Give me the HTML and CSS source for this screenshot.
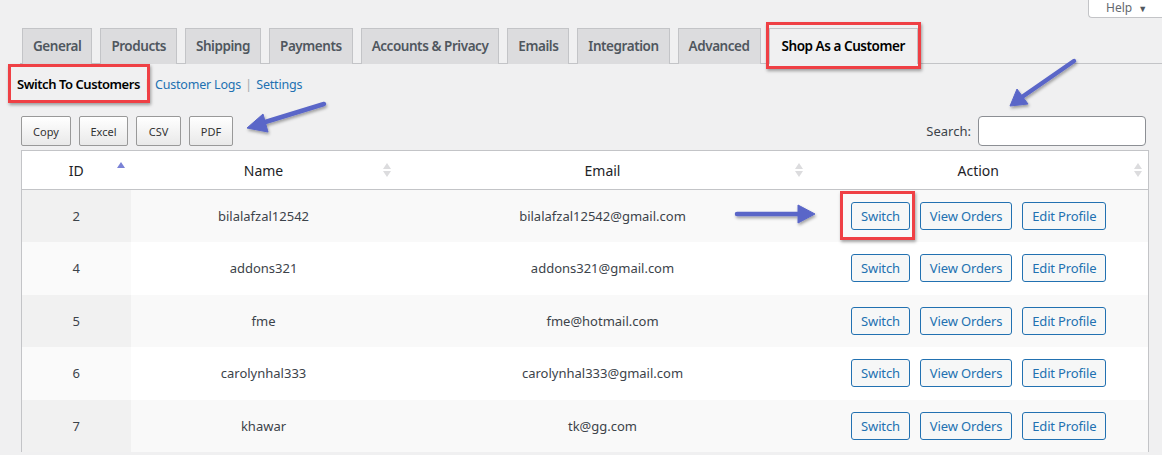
FILE: index.html
```html
<!DOCTYPE html>
<html>
<head>
<meta charset="utf-8">
<link rel="stylesheet" href="styles.css">
</head>
<body>
<div class="page">
  <div class="topbar">
    <div class="help">Help <span class="caret">▼</span></div>
  </div>
  <nav class="tabs">
    <a class="tab">General</a>
    <a class="tab">Products</a>
    <a class="tab">Shipping</a>
    <a class="tab">Payments</a>
    <a class="tab">Accounts &amp; Privacy</a>
    <a class="tab">Emails</a>
    <a class="tab">Integration</a>
    <a class="tab">Advanced</a>
    <a class="tab active mark mark-tab">Shop As a Customer</a>
  </nav>
  <ul class="subnav">
    <li class="current mark mark-sub">Switch To Customers</li>
    <li class="sep">|</li>
    <li><a>Customer Logs</a></li>
    <li class="sep">|</li>
    <li><a>Settings</a></li>
  </ul>
  <div class="toolbar">
    <div class="exports">
      <button class="dt-btn">Copy</button>
      <button class="dt-btn">Excel</button>
      <button class="dt-btn">CSV</button>
      <button class="dt-btn">PDF</button>
    </div>
    <label class="search">Search: <input type="text"></label>
  </div>
  <table class="grid">
    <colgroup>
      <col class="c-id"><col class="c-name"><col class="c-email"><col class="c-action">
    </colgroup>
    <thead>
      <tr>
        <th>ID<svg class="sort asc" width="8" height="12" viewBox="0 0 8 12"><path d="M0 7 L4 1 L8 7 Z"/></svg></th>
        <th>Name<svg class="sort" width="8" height="14" viewBox="0 0 8 14"><path d="M0 6 L4 0 L8 6 Z M0 8 L4 14 L8 8 Z"/></svg></th>
        <th>Email<svg class="sort" width="8" height="14" viewBox="0 0 8 14"><path d="M0 6 L4 0 L8 6 Z M0 8 L4 14 L8 8 Z"/></svg></th>
        <th>Action<svg class="sort" width="8" height="14" viewBox="0 0 8 14"><path d="M0 6 L4 0 L8 6 Z M0 8 L4 14 L8 8 Z"/></svg></th>
      </tr>
    </thead>
    <tbody>
      <tr>
        <td>2</td><td>bilalafzal12542</td><td>bilalafzal12542@gmail.com</td>
        <td><div class="acts"><button class="wp-btn mark mark-btn">Switch</button><button class="wp-btn">View Orders</button><button class="wp-btn">Edit Profile</button></div></td>
      </tr>
      <tr>
        <td>4</td><td>addons321</td><td>addons321@gmail.com</td>
        <td><div class="acts"><button class="wp-btn">Switch</button><button class="wp-btn">View Orders</button><button class="wp-btn">Edit Profile</button></div></td>
      </tr>
      <tr>
        <td>5</td><td>fme</td><td>fme@hotmail.com</td>
        <td><div class="acts"><button class="wp-btn">Switch</button><button class="wp-btn">View Orders</button><button class="wp-btn">Edit Profile</button></div></td>
      </tr>
      <tr>
        <td>6</td><td>carolynhal333</td><td>carolynhal333@gmail.com</td>
        <td><div class="acts"><button class="wp-btn">Switch</button><button class="wp-btn">View Orders</button><button class="wp-btn">Edit Profile</button></div></td>
      </tr>
      <tr>
        <td>7</td><td>khawar</td><td>tk@gg.com</td>
        <td><div class="acts"><button class="wp-btn">Switch</button><button class="wp-btn">View Orders</button><button class="wp-btn">Edit Profile</button></div></td>
      </tr>
    </tbody>
  </table>
  <svg class="arrows" width="1162" height="455" viewBox="0 0 1162 455">
    <defs>
      <filter id="sh" x="-20%" y="-20%" width="140%" height="140%">
        <feDropShadow dx="1" dy="2" stdDeviation="1.5" flood-color="#000" flood-opacity="0.35"/>
      </filter>
    </defs>
    <g fill="#5a66c8" stroke="#5a66c8" filter="url(#sh)">
      <line x1="324" y1="104" x2="262" y2="123" stroke-width="4.5" stroke-linecap="round"/>
      <path d="M247 128 L263 114 L268 132 Z" stroke-width="1" stroke-linejoin="round"/>
      <line x1="1074" y1="61" x2="1022" y2="97" stroke-width="4.5" stroke-linecap="round"/>
      <path d="M1010 106 L1017 89 L1028 104 Z" stroke-width="1" stroke-linejoin="round"/>
      <line x1="737" y1="214" x2="799" y2="214" stroke-width="4.5" stroke-linecap="round"/>
      <path d="M815 214 L798 205 L798 223 Z" stroke-width="1" stroke-linejoin="round"/>
    </g>
  </svg>
</div>
</body>
</html>
```

FILE: styles.css
```css
* { box-sizing: border-box; }
html, body { margin: 0; padding: 0; }
body {
  background: #f0f0f1;
  font-family: "Noto Sans", "Open Sans", sans-serif;
  color: #3c434a;
  width: 1162px;
  height: 455px;
  overflow: hidden;
}
.page { position: relative; width: 1162px; height: 455px; }

.topbar { height: 28px; display: flex; justify-content: flex-end; }
.help {
  height: 18px;
  width: 74px;
  padding: 0 0 0 17px;
  background: #fff;
  border: 1px solid #c3c4c7;
  border-top: none;
  border-right: none;
  border-radius: 0 0 0 4px;
  font-size: 12px;
  color: #646970;
  line-height: 16px;
}
.help .caret { font-size: 9px; margin-left: 3px; color: #50575e; }

.tabs {
  display: flex;
  gap: 8px;
  margin-left: 20px;
  padding-left: 2px;
  border-bottom: 1px solid #c3c4c7;
  height: 36px;
}
.tab {
  height: 36px;
  padding: 0 10px;
  background: #dcdcde;
  border: 1px solid #c3c4c7;
  border-bottom: none;
  font-size: 13.5px;
  font-weight: 600;
  line-height: 34px;
  color: #50575e;
  white-space: nowrap;
  letter-spacing: -0.45px;
}
.tab.active {
  background: #f0f0f1;
  color: #000;
  height: 36px;
  margin-bottom: -1px;
  padding: 0 12px;
  box-shadow: 0 1px 0 #f0f0f1;
}

.mark { position: relative; }
.mark::after {
  content: "";
  position: absolute;
  border: 3px solid #ef4045;
  box-shadow: 1px 2px 3px rgba(0,0,0,0.35);
  pointer-events: none;
}
.mark-tab::after { left: -4px; right: -4px; top: -7px; bottom: -5px; }
.mark-sub::after { left: -9px; right: -10px; top: -10px; bottom: -9px; }
.mark-btn::after { left: -12px; right: -6px; top: -12px; bottom: -11px; }

.subnav {
  list-style: none;
  margin: 10px 0 0 17px;
  padding: 0;
  display: flex;
  align-items: center;
  height: 20px;
  font-size: 13px;
  line-height: 20px;
}
.subnav li { white-space: nowrap; }
.subnav .current { color: #000; font-weight: 600; letter-spacing: -0.45px; }
.subnav .sep { color: #a7aaad; margin: 0 4px 0 4px; }
.subnav a { color: #2271b1; font-size: 12.5px; letter-spacing: -0.2px; }

.toolbar {
  display: flex;
  justify-content: space-between;
  align-items: center;
  margin: 22px 16px 0 21px;
  height: 30px;
}
.exports { display: flex; gap: 8px; }
.dt-btn {
  height: 30px;
  padding: 0;
  border: 1px solid #999;
  border-radius: 2px;
  background: linear-gradient(#fff 0%, #e9e9e9 100%);
  font-family: "Noto Sans", sans-serif;
  font-size: 11px;
  color: #333;
}
.dt-btn:nth-child(1) { width: 50px; }
.dt-btn:nth-child(2) { width: 49px; }
.dt-btn:nth-child(3) { width: 45px; }
.dt-btn:nth-child(4) { width: 44px; }
.search { font-size: 13px; color: #3c434a; display: flex; align-items: center; gap: 7px; }
.search input {
  width: 168px;
  height: 30px;
  border: 1px solid #8c8f94;
  border-radius: 4px;
  background: #fff;
}

.grid {
  margin: 4px 0 0 21px;
  width: 1127px;
  border-collapse: collapse;
  table-layout: fixed;
  border: 1px solid #c3c4c7;
  border-bottom: none;
  font-size: 13px;
  color: #3c434a;
}
.c-id { width: 109px; }
.c-name { width: 266px; }
.c-email { width: 412px; }
.c-action { width: 340px; }
.grid th {
  position: relative;
  height: 39px;
  background: #fff;
  font-weight: 400;
  font-size: 14px;
  color: #1d2327;
  border-bottom: 1px solid #c3c4c7;
  text-align: center;
  padding: 0;
}
.sort { position: absolute; right: 6px; top: 12px; fill: #dcdcde; }
.sort.asc { fill: #7a82d6; right: 6px; top: 10px; }
.grid td {
  height: 52.5px;
  text-align: center;
  padding: 0;
  background: #fff;
}
.grid tbody tr:nth-child(odd) td { background: #f9f9f9; }
.grid tbody tr:nth-child(odd) td:first-child { background: #f1f1f1; }
.grid tbody tr:nth-child(even) td:first-child { background: #fafafa; }

.acts { display: flex; justify-content: center; gap: 10px; padding-left: 1px; }
.wp-btn {
  height: 28px;
  padding: 0 9px;
  border: 1px solid #2271b1;
  border-radius: 3px;
  background: #f6f7f7;
  color: #2271b1;
  font-family: "Noto Sans", sans-serif;
  font-size: 13px;
  line-height: 26px;
  white-space: nowrap;
  letter-spacing: -0.15px;
}

.arrows { position: absolute; left: 0; top: 0; pointer-events: none; }
```
